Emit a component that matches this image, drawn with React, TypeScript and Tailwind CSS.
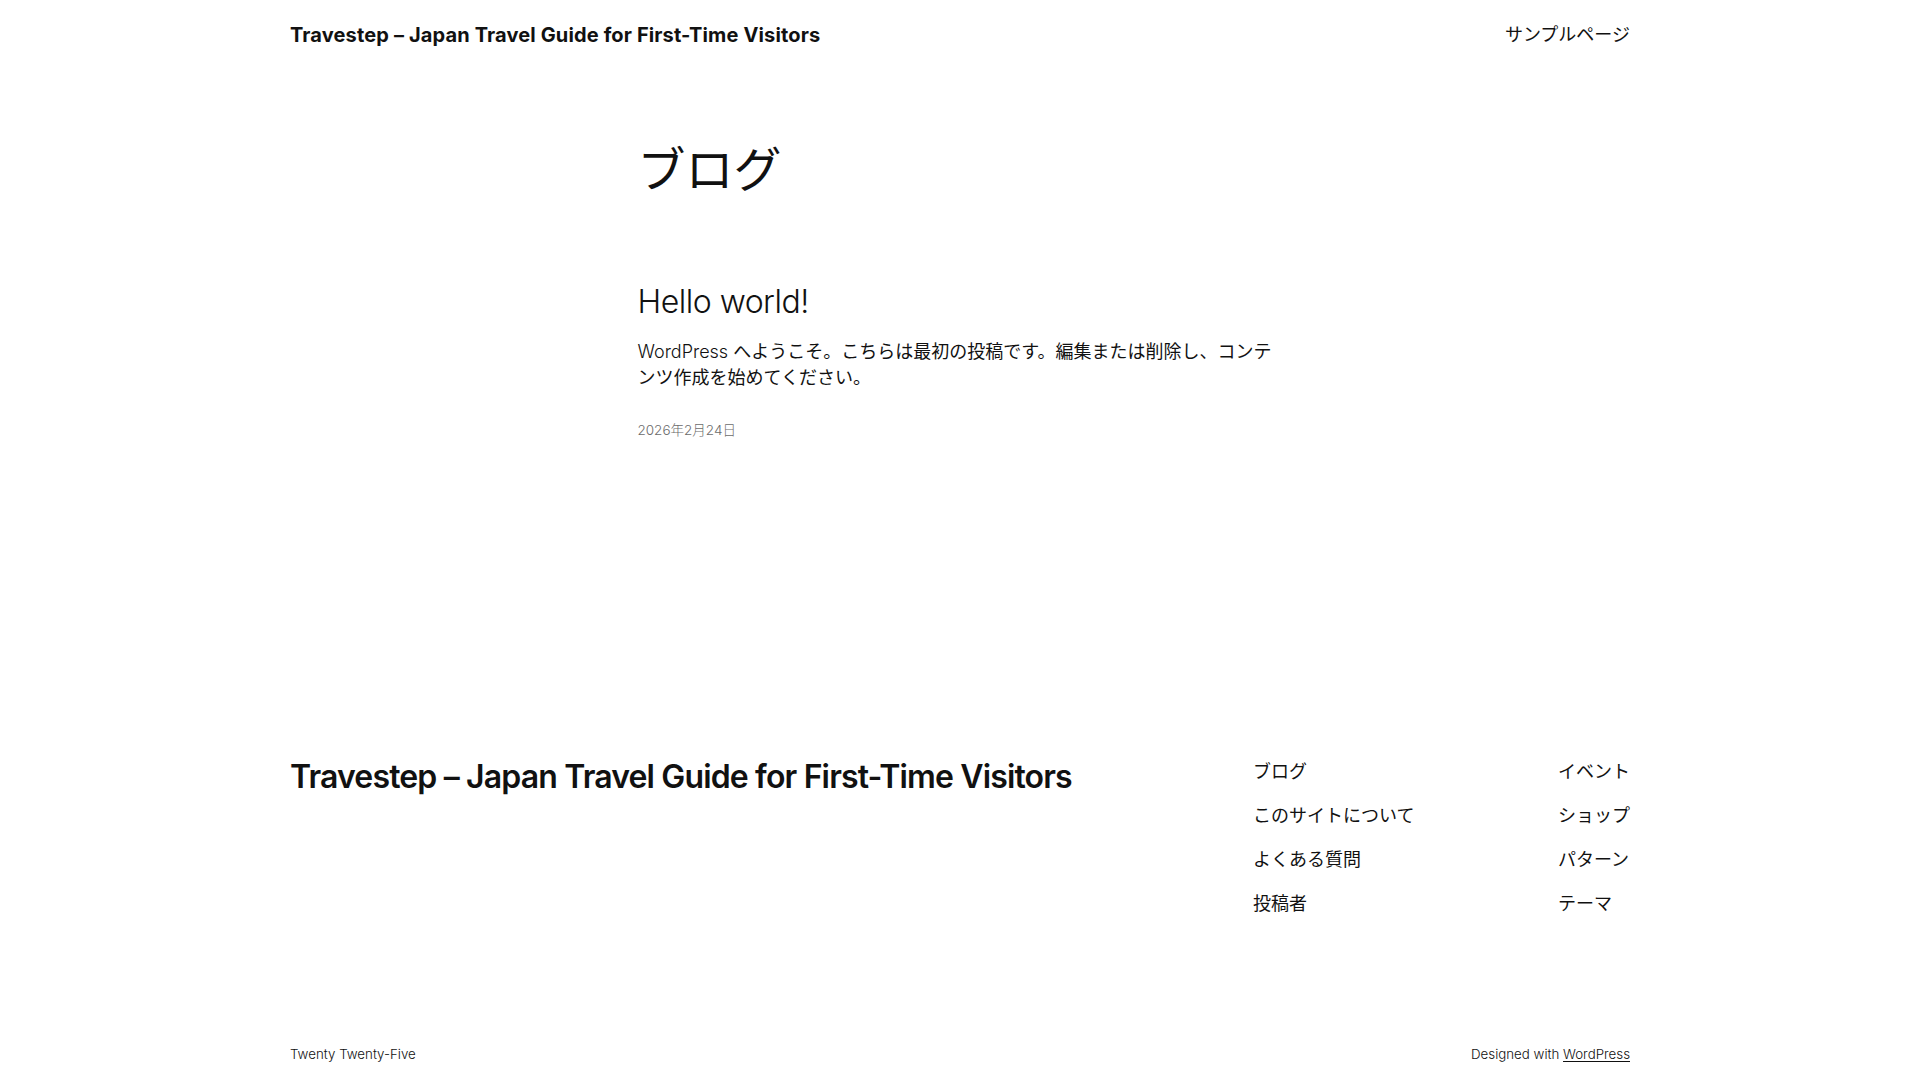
import React from "react";

const latin = "font-['Inter','Noto_Sans_CJK_JP',sans-serif]";

export default function App() {
  return (
    <div className={`min-h-[1080px] bg-white text-[#111111] ${latin}`}>
      <div className="mx-auto w-[1340px]">
        <header className="flex h-[70px] items-center justify-between">
          <div className="text-[20px] font-bold tracking-[0.14px] leading-[1.4]">
            Travestep – Japan Travel Guide for First-Time Visitors
          </div>
          <nav className="text-[18px] font-normal leading-[1.4]">サンプルページ</nav>
        </header>
      </div>

      <main className="mx-auto w-[645px]">
        <h1 className="mt-[71px] text-[48px] font-normal leading-[58px]">ブログ</h1>
        <h2 className="mt-[84px] text-[32px] font-light leading-[38px] tracking-[-0.5px]">Hello world!</h2>
        <p className="mt-[18px] text-[18px] font-normal leading-[26px]">
          <span className="font-light">WordPress</span> へようこそ。こちらは最初の投稿です。編集または削除し、コンテンツ作成を始めてください。
        </p>
        <div className="mt-[29px] text-[13.5px] font-light leading-[20px] text-[#6b6b6b]">2026年2月24日</div>
      </main>

      <footer className="mx-auto mt-[319px] w-[1340px]">
        <div className="flex items-start justify-between">
          <div className="text-[32px] font-semibold leading-[36px] tracking-[-0.85px]">
            Travestep – Japan Travel Guide for First-Time Visitors
          </div>
          <div className="flex">
            <ul className="flex w-[305px] flex-col gap-[18px] text-[18px] font-normal leading-[26px]">
              <li>ブログ</li>
              <li>このサイトについて</li>
              <li>よくある質問</li>
              <li>投稿者</li>
            </ul>
            <ul className="flex flex-col gap-[18px] text-[18px] font-normal leading-[26px]">
              <li>イベント</li>
              <li>ショップ</li>
              <li>パターン</li>
              <li>テーマ</li>
            </ul>
          </div>
        </div>
        <div className="mt-[127px] flex justify-between pb-[17px] text-[13.3px] font-light leading-[20px]">
          <div>Twenty Twenty-Five</div>
          <div>
            Designed with <span className="underline underline-offset-2">WordPress</span>
          </div>
        </div>
      </footer>
    </div>
  );
}
